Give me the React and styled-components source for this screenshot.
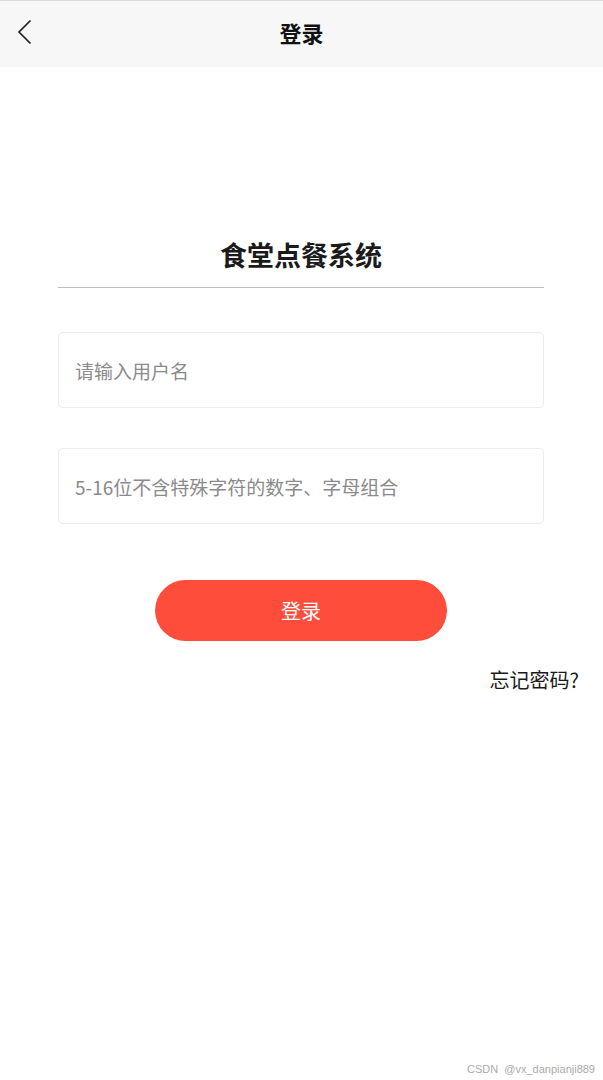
import React from "react";
import styled, { createGlobalStyle } from "styled-components";

const GlobalStyle = createGlobalStyle`
    html, body {
        margin: 0;
        padding: 0;
        background: #fff;
        font-family: "Noto Sans CJK SC", "Noto Sans", sans-serif;
    }
`;

const BackIcon = () => (
    <svg width="18" height="28" viewBox="0 0 18 28" fill="none">
        <path d="M14.5 2.5 L3 14 L14.5 25.5" stroke="#222" strokeWidth="1.7" />
    </svg>
);

const App = () => {
    return (
        <Page>
            <GlobalStyle />
            <Header>
                <BackButton><BackIcon /></BackButton>
                <HeaderTitle>登录</HeaderTitle>
            </Header>
            <Main>
                <AppName>食堂点餐系统</AppName>
                <Divider />
                <Field placeholder="请输入用户名" $top={44} />
                <Field type="password" placeholder="5-16位不含特殊字符的数字、字母组合" $top={40} />
                <LoginButton>登录</LoginButton>
                <Forgot>忘记密码?</Forgot>
            </Main>
            <Watermark>CSDN&nbsp; @vx_danpianji889</Watermark>
        </Page>
    );
};

const Page = styled.div`
    width: 603px;
    height: 1080px;
    display: flex;
    flex-direction: column;
    position: relative;
    overflow: hidden;
`;

const Header = styled.div`
    height: 66px;
    border-top: 1px solid #dcdcdc;
    background: #f7f7f7;
    display: flex;
    align-items: center;
    justify-content: center;
    position: relative;
`;

const BackButton = styled.div`
    position: absolute;
    left: 16px;
    top: 17px;
    display: flex;
`;

const HeaderTitle = styled.div`
    font-size: 22px;
    font-weight: 700;
    color: #111;
    margin-top: -4px;
`;

const Main = styled.div`
    display: flex;
    flex-direction: column;
    padding: 0 59px 0 58px;
`;

const AppName = styled.div`
    margin-top: 168px;
    text-align: center;
    font-size: 27px;
    font-weight: 700;
    color: #1a1a1a;
    line-height: 40px;
`;

const Divider = styled.div`
    height: 1px;
    background: #bdbdbd;
    margin-top: 12px;
`;

const Field = styled.input`
    margin-top: ${p => p.$top}px;
    height: 76px;
    box-sizing: border-box;
    border: 1px solid #ececec;
    border-radius: 5px;
    padding: 0 16px;
    font-family: inherit;
    font-size: 19px;
    color: #333;
    outline: none;
    background: #fff;

    &::placeholder {
        color: #8a8a8a;
    }
`;

const LoginButton = styled.button`
    align-self: center;
    margin-top: 56px;
    width: 292px;
    height: 61px;
    border: none;
    border-radius: 31px;
    background: #ff4d3c;
    color: #fff;
    font-family: inherit;
    font-size: 20px;
`;

const Forgot = styled.div`
    align-self: flex-end;
    margin-top: 24px;
    margin-right: -35px;
    font-size: 20px;
    color: #1a1a1a;
`;

const Watermark = styled.div`
    position: absolute;
    right: 8px;
    bottom: 5px;
    font-family: "Liberation Sans", sans-serif;
    font-size: 11px;
    color: #aaa;
`;

export default App;
